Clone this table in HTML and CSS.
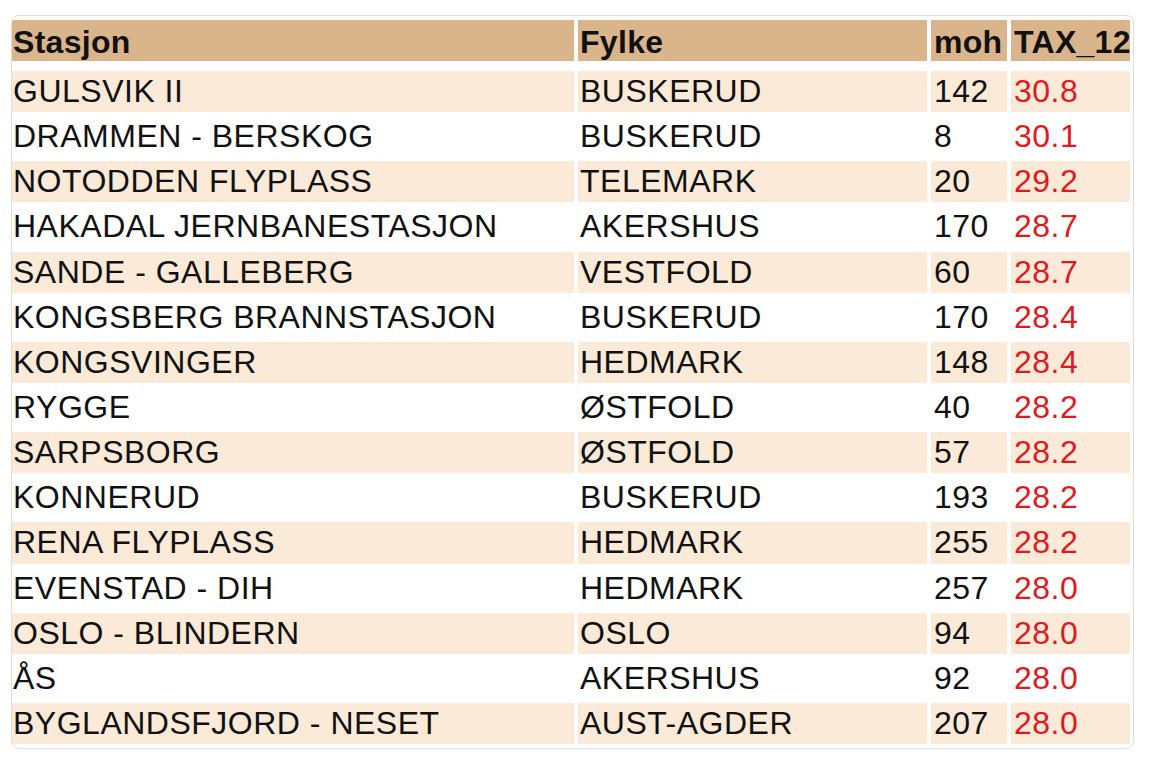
FILE: index.html
```html
<!DOCTYPE html>
<html lang="no">
<head>
<meta charset="utf-8">
<title>TAX_12</title>
<link rel="stylesheet" href="styles.css">
</head>
<body>
<div class="wrap">
<table class="tbl">
<colgroup>
<col class="c1"><col class="c2"><col class="c3"><col class="c4">
</colgroup>
<thead>
<tr><th>Stasjon</th><th>Fylke</th><th>moh</th><th>TAX_12</th></tr>
</thead>
<tbody>
<tr><td>GULSVIK II</td><td>BUSKERUD</td><td>142</td><td class="v">30.8</td></tr>
<tr><td>DRAMMEN - BERSKOG</td><td>BUSKERUD</td><td>8</td><td class="v">30.1</td></tr>
<tr><td>NOTODDEN FLYPLASS</td><td>TELEMARK</td><td>20</td><td class="v">29.2</td></tr>
<tr><td>HAKADAL JERNBANESTASJON</td><td>AKERSHUS</td><td>170</td><td class="v">28.7</td></tr>
<tr><td>SANDE - GALLEBERG</td><td>VESTFOLD</td><td>60</td><td class="v">28.7</td></tr>
<tr><td>KONGSBERG BRANNSTASJON</td><td>BUSKERUD</td><td>170</td><td class="v">28.4</td></tr>
<tr><td>KONGSVINGER</td><td>HEDMARK</td><td>148</td><td class="v">28.4</td></tr>
<tr><td>RYGGE</td><td>ØSTFOLD</td><td>40</td><td class="v">28.2</td></tr>
<tr><td>SARPSBORG</td><td>ØSTFOLD</td><td>57</td><td class="v">28.2</td></tr>
<tr><td>KONNERUD</td><td>BUSKERUD</td><td>193</td><td class="v">28.2</td></tr>
<tr><td>RENA FLYPLASS</td><td>HEDMARK</td><td>255</td><td class="v">28.2</td></tr>
<tr><td>EVENSTAD - DIH</td><td>HEDMARK</td><td>257</td><td class="v">28.0</td></tr>
<tr><td>OSLO - BLINDERN</td><td>OSLO</td><td>94</td><td class="v">28.0</td></tr>
<tr><td>ÅS</td><td>AKERSHUS</td><td>92</td><td class="v">28.0</td></tr>
<tr><td>BYGLANDSFJORD - NESET</td><td>AUST-AGDER</td><td>207</td><td class="v">28.0</td></tr>
</tbody>
</table>
</div>
</body>
</html>
```

FILE: styles.css
```css
html, body {
  margin: 0;
  padding: 0;
  background: #ffffff;
}

body {
  font-family: "Liberation Sans", Arial, sans-serif;
  color: #111111;
}

.wrap {
  box-sizing: border-box;
  width: 1123px;
  margin: 15px 0 0 11px;
  border: 1px solid #dedede;
  border-radius: 8px;
  overflow: hidden;
}

.tbl {
  border-collapse: separate;
  border-spacing: 4px 4px;
  margin: 0 -2px 0 -4px;
  table-layout: fixed;
  width: 1126px;
  font-size: 32px;
}

.c1 { width: 562px; }
.c2 { width: 349px; }
.c3 { width: 76px; }
.c4 { width: 119px; }

.tbl th,
.tbl td {
  text-align: left;
  padding: 2px 1px 2px 1px;
  height: 41.15px;
  box-sizing: border-box;
  line-height: 37px;
  white-space: nowrap;
  overflow: hidden;
}

.tbl th {
  background: #dab58b;
  font-weight: bold;
  color: #111111;
  letter-spacing: 0.3px;
  height: 47px;
  padding-top: 4px;
  padding-bottom: 0;
  border-bottom: 6px solid #ffffff;
}

.tbl td {
  letter-spacing: 0.5px;
}

.tbl td:nth-child(2),
.tbl th:nth-child(2) {
  padding-left: 2px;
}

.tbl td:nth-child(3),
.tbl td:nth-child(4),
.tbl th:nth-child(3),
.tbl th:nth-child(4) {
  padding-left: 3px;
  padding-right: 0;
}

.tbl tbody tr:nth-child(odd) td {
  background: #fbead8;
}

.tbl td.v {
  color: #e0191f;
}
```
